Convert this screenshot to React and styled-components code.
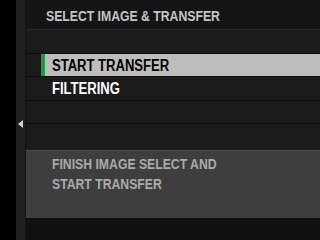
import React from 'react';
import styled, { createGlobalStyle } from 'styled-components';

const GlobalStyle = createGlobalStyle`
  html, body {
    margin: 0;
    padding: 0;
    background: #000;
  }
  body {
    font-family: "Liberation Sans", Arial, sans-serif;
    font-weight: bold;
  }
`;

const Screen = styled.div`
  display: flex;
  width: 320px;
  height: 240px;
  overflow: hidden;
  background: #000;
`;

const Gutter = styled.div`
  width: 16px;
  background: #000;
`;

const SideStrip = styled.div`
  position: relative;
  width: 10px;
  background: #1f1f1f;
  border-right: 1px solid #141414;
  box-sizing: border-box;
`;

const Arrow = styled.div`
  position: absolute;
  left: 2px;
  top: 120px;
  width: 0;
  height: 0;
  border-top: 4px solid transparent;
  border-bottom: 4px solid transparent;
  border-right: 5px solid #d0d0d0;
`;

const Main = styled.div`
  flex: 1;
  display: flex;
  flex-direction: column;
  background: #1b1b1b;
`;

// camera UI uses a condensed face; squeeze the Arial-metric font
const Label = styled.span`
  display: inline-block;
  white-space: nowrap;
  transform: scaleX(0.815);
  transform-origin: left center;
`;

const Header = styled.div`
  height: 30px;
  display: flex;
  align-items: center;
  padding: 1px 0 0 20px;
  background: #141414;
  border-bottom: 1px solid #2a2a2a;
  box-sizing: border-box;
  color: #c4c4c4;
  font-size: 15px;
`;

const Row = styled.div`
  height: 23.5px;
  display: flex;
  align-items: stretch;
  border-bottom: 1.5px solid #0c0c0c;
  box-sizing: border-box;
`;

const Item = styled.div`
  flex: 1;
  display: flex;
  align-items: center;
  margin-left: 15px;
  padding: 2px 0 0 7px;
  font-size: 16px;
  color: ${({ selected }) => (selected ? '#000' : '#fff')};
  background: ${({ selected }) => (selected ? '#bdbdbd' : 'transparent')};
  border-left: 4px solid ${({ selected }) => (selected ? '#1f9a45' : 'transparent')};
`;

const Spacer = styled.div`
  height: 26px;
`;

const Description = styled.div`
  height: 68px;
  background: #3e3e3e;
  border-top: 1px solid #4a4a4a;
  box-sizing: border-box;
  padding: 3px 0 0 26px;
  color: #ababab;
  font-size: 15px;
  line-height: 20px;
`;

const Footer = styled.div`
  flex: 1;
  background: #101010;
`;

const items = [
  { label: '' },
  { label: 'START TRANSFER', selected: true },
  { label: 'FILTERING' },
  { label: '' },
];

export default function App() {
  return (
    <>
      <GlobalStyle />
      <Screen>
        <Gutter />
        <SideStrip>
          <Arrow />
        </SideStrip>
        <Main>
          <Header>
            <Label>SELECT IMAGE &amp; TRANSFER</Label>
          </Header>
          {items.map((it, i) => (
            <Row key={i}>
              <Item selected={it.selected}>
                <Label>{it.label}</Label>
              </Item>
            </Row>
          ))}
          <Spacer />
          <Description>
            <Label>FINISH IMAGE SELECT AND</Label>
            <br />
            <Label>START TRANSFER</Label>
          </Description>
          <Footer />
        </Main>
      </Screen>
    </>
  );
}
